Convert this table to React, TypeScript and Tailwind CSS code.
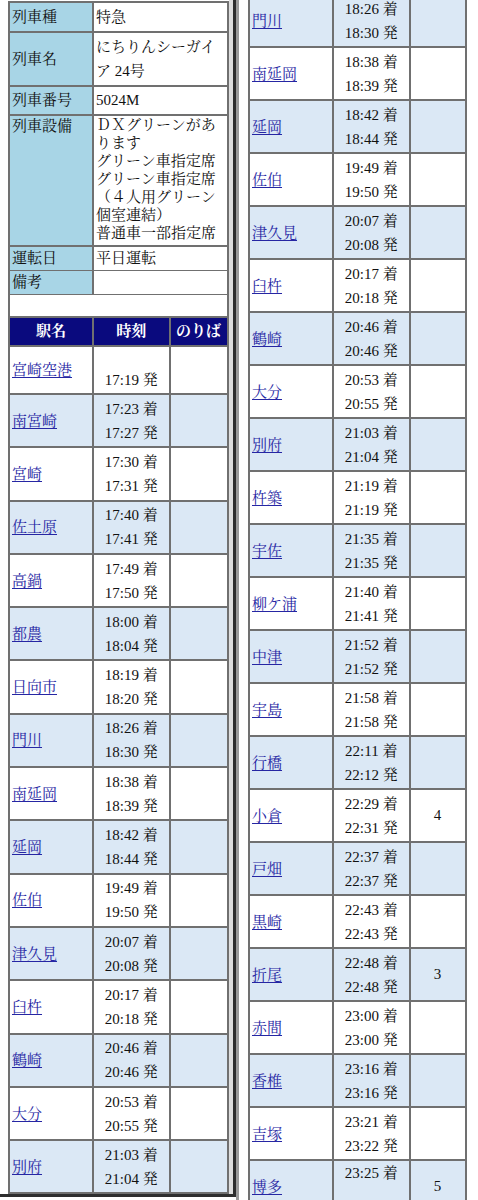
import React from "react";

type Row = { name: string; t1: string; t2: string; p?: string };

const all: Row[] = [
  { name: "宮崎空港", t1: "", t2: "17:19 発" },
  { name: "南宮崎", t1: "17:23 着", t2: "17:27 発" },
  { name: "宮崎", t1: "17:30 着", t2: "17:31 発" },
  { name: "佐土原", t1: "17:40 着", t2: "17:41 発" },
  { name: "高鍋", t1: "17:49 着", t2: "17:50 発" },
  { name: "都農", t1: "18:00 着", t2: "18:04 発" },
  { name: "日向市", t1: "18:19 着", t2: "18:20 発" },
  { name: "門川", t1: "18:26 着", t2: "18:30 発" },
  { name: "南延岡", t1: "18:38 着", t2: "18:39 発" },
  { name: "延岡", t1: "18:42 着", t2: "18:44 発" },
  { name: "佐伯", t1: "19:49 着", t2: "19:50 発" },
  { name: "津久見", t1: "20:07 着", t2: "20:08 発" },
  { name: "臼杵", t1: "20:17 着", t2: "20:18 発" },
  { name: "鶴崎", t1: "20:46 着", t2: "20:46 発" },
  { name: "大分", t1: "20:53 着", t2: "20:55 発" },
  { name: "別府", t1: "21:03 着", t2: "21:04 発" },
  { name: "杵築", t1: "21:19 着", t2: "21:19 発" },
  { name: "宇佐", t1: "21:35 着", t2: "21:35 発" },
  { name: "柳ケ浦", t1: "21:40 着", t2: "21:41 発" },
  { name: "中津", t1: "21:52 着", t2: "21:52 発" },
  { name: "宇島", t1: "21:58 着", t2: "21:58 発" },
  { name: "行橋", t1: "22:11 着", t2: "22:12 発" },
  { name: "小倉", t1: "22:29 着", t2: "22:31 発", p: "4" },
  { name: "戸畑", t1: "22:37 着", t2: "22:37 発" },
  { name: "黒崎", t1: "22:43 着", t2: "22:43 発" },
  { name: "折尾", t1: "22:48 着", t2: "22:48 発", p: "3" },
  { name: "赤間", t1: "23:00 着", t2: "23:00 発" },
  { name: "香椎", t1: "23:16 着", t2: "23:16 発" },
  { name: "吉塚", t1: "23:21 着", t2: "23:22 発" },
  { name: "博多", t1: "23:25 着", t2: "", p: "5" },
];

function StationRow({ r, idx, h }: { r: Row; idx: number; h: string }) {
  const bg = idx % 2 === 1 ? "bg-[#dbe8f5]" : "bg-white";
  const first = idx === 0;
  return (
    <div className={`grid grid-cols-[82px_74.5px_1fr] gap-[2px] ${first ? "h-[46px]" : h}`}>
      <div className={`${bg} flex items-center pl-[2px]`}>
        <a href="#" className="text-[#2626a3] underline underline-offset-2 leading-[20px]">
          {r.name}
        </a>
      </div>
      <div className={`${bg} flex flex-col items-center justify-center`}>
        {first ? (
          <>
            <div className="h-[20px]" />
            <div className="leading-[24px]">{r.t2}</div>
          </>
        ) : r.t2 === "" ? (
          <div className="self-stretch h-full">
            <div className="leading-[24px] text-center">{r.t1}</div>
          </div>
        ) : (
          <>
            <div className="leading-[24px]">{r.t1}</div>
            <div className="leading-[24px]">{r.t2}</div>
          </>
        )}
      </div>
      <div className={`${bg} flex items-center justify-center`}>{r.p ?? ""}</div>
    </div>
  );
}

function InfoRow({
  label,
  children,
  h,
  top,
}: {
  label: string;
  children?: React.ReactNode;
  h: string;
  top?: boolean;
}) {
  return (
    <div className={`grid grid-cols-[82px_1fr] gap-[2px] ${h}`}>
      <div className={`bg-[#a8d5e6] flex ${top ? "items-start pt-[1px] leading-[18px]" : "items-center"} pl-[2px]`}>
        {label}
      </div>
      <div className={`bg-white flex ${top ? "items-start" : "items-center"} pl-[2px]`}>{children}</div>
    </div>
  );
}

export default function App() {
  const leftRows = all.slice(0, 16);
  const rightRows = all.slice(7);
  return (
    <div className="w-[478px] h-[1200px] overflow-hidden bg-white flex text-[15px] text-[#111] font-['Liberation_Serif','Noto_Serif_CJK_JP','Noto_Sans_CJK_JP',serif]">
      {/* left panel */}
      <div className="w-[236px] h-[1197px] shrink-0 border-r-[3px] border-b-[3px] border-[#2e2e2e] flex overflow-hidden bg-white">
        <div className="w-[228.5px] shrink-0 pl-[8px] pt-[1px]">
          <div className="w-[220.5px] bg-[#707070] p-[2px] flex flex-col gap-[2px]">
            <InfoRow label="列車種" h="h-[27.5px]">特急</InfoRow>
            <InfoRow label="列車名" h="h-[52.5px]">
              <div className="leading-[24px]">
                <div>にちりんシーガイ</div>
                <div>ア 24号</div>
              </div>
            </InfoRow>
            <InfoRow label="列車番号" h="h-[26.5px]">5024M</InfoRow>
            <InfoRow label="列車設備" h="h-[129.5px]" top>
              <div className="leading-[18px] pt-[0.5px]">
                <div>ＤＸグリーンがあ</div>
                <div>ります</div>
                <div>グリーン車指定席</div>
                <div>グリーン車指定席</div>
                <div>（４人用グリーン</div>
                <div>個室連結）</div>
                <div>普通車一部指定席</div>
              </div>
            </InfoRow>
            <InfoRow label="運転日" h="h-[22px]">平日運転</InfoRow>
            <InfoRow label="備考" h="h-[21.5px]" />
            <div className="bg-white h-[21px]" />
            <div className="grid grid-cols-[82px_74.5px_1fr] gap-[2px] h-[27.5px]">
              <div className="bg-[#0a0a7e] text-white font-bold flex items-center justify-center">駅名</div>
              <div className="bg-[#0a0a7e] text-white font-bold flex items-center justify-center">時刻</div>
              <div className="bg-[#0a0a7e] text-white font-bold flex items-center justify-center">のりば</div>
            </div>
            {leftRows.map((r, i) => (
              <StationRow key={r.name + i} r={r} idx={i} h="h-[51.3px]" />
            ))}
            <div className="bg-white h-[20px]" />
          </div>
        </div>
        <div className="flex-1 bg-[#dedede]" />
      </div>
      {/* right panel */}
      <div className="flex-1 h-[1200px] border-l-[3px] border-[#9a9a9a] pl-[9px] overflow-hidden bg-white">
        <div className="w-[218.5px] -mt-[7px] bg-[#707070] p-[2px] flex flex-col gap-[2px]">
          {rightRows.map((r, i) => (
            <StationRow key={r.name + i} r={r} idx={i + 7} h="h-[51px]" />
          ))}
        </div>
      </div>
    </div>
  );
}
